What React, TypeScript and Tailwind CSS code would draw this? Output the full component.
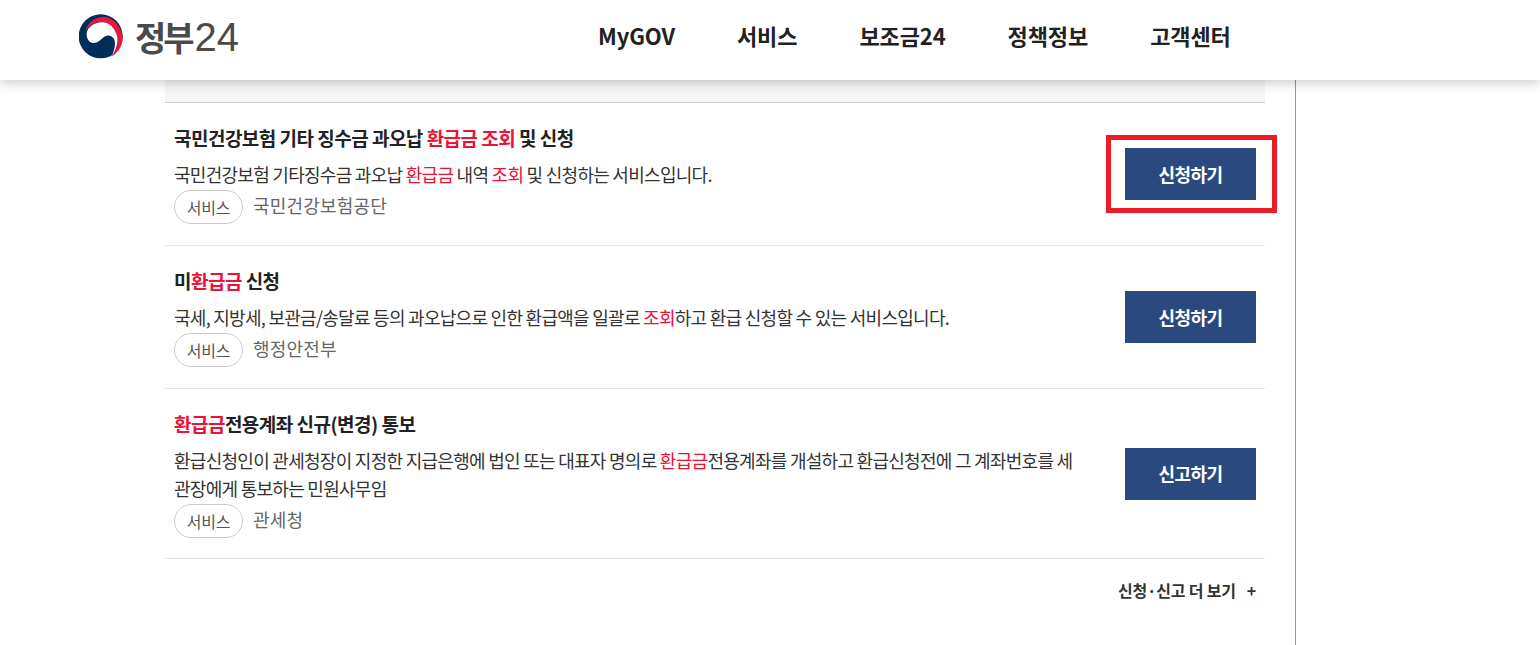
import React from "react";

const font = { fontFamily: '"Noto Sans CJK KR", "Noto Sans", sans-serif' };

function R({ children }: { children: React.ReactNode }) {
  return <span className="text-[#ec1238]">{children}</span>;
}

function Logo() {
  return (
    <svg width="46" height="46" viewBox="15 15 138 138" className="shrink-0">
      <circle cx="80" cy="82" r="66" fill="#002d5a" />
      <path d="M34 70C38 40 66 22 92 24C118 26 140 52 146 80C148 105 135 130 112 143C128 122 134 100 130 84C124 58 104 40 82 40C60 40 42 50 34 70Z" fill="#e8173c" />
      <path d="M38 76C38 56 60 40 84 40C106 40 124 58 130 84C132 100 128 120 114 141C122 120 126 104 120 90C114 78 100 76 90 84C80 92 72 102 58 102C46 102 38 90 38 76Z" fill="#fff" />
    </svg>
  );
}

function Row({
  title, desc, org, action, tall,
}: { title: React.ReactNode; desc: React.ReactNode; org: string; action: string; tall?: boolean }) {
  return (
    <div className={`flex items-center border-b border-[#e5e5e5] pl-[9px] pr-[9px] ${tall ? "h-[170px]" : "h-[143px]"}`}>
      <div className="min-w-0 flex-1 self-start pt-[21px]">
        <div className="text-[19px] leading-[27px] font-bold text-[#222] tracking-[-0.52px]">{title}</div>
        <div className="mt-[9px] w-[910px] break-all text-[18px] leading-[28px] text-[#333] tracking-[-0.72px]">{desc}</div>
        <div className="mt-[2px] flex items-center">
          <span className="flex h-[34px] w-[69px] items-center justify-center rounded-full border border-[#ccc] text-[16px] text-[#555] tracking-[-0.2px]">서비스</span>
          <span className="ml-[10px] pb-[3px] text-[18px] text-[#666] tracking-[0.2px]">{org}</span>
        </div>
      </div>
      <button className="flex h-[52px] w-[131px] shrink-0 items-center justify-center bg-[#2a4a7f] text-[18px] font-bold text-white tracking-[-0.5px]">{action}</button>
    </div>
  );
}

export default function App() {
  return (
    <div style={font} className="relative h-[645px] w-[1540px] overflow-hidden bg-white">
      <header className="relative z-10 flex h-[80px] items-center bg-white pl-[79px] shadow-[0_2px_12px_rgba(0,0,0,0.24)]">
        <div className="flex w-[519px] items-center pb-[6px]">
          <Logo />
          <span className="ml-[10px] text-[34px] leading-none font-bold text-[#4a4a4a] tracking-[-3px]">정부</span>
          <span className="ml-[3px] text-[40px] leading-none text-[#4a4a4a]" style={{ fontFamily: '"Liberation Sans", sans-serif' }}>24</span>
        </div>
        <nav className="flex gap-[62px] pb-[9px] text-[22px] font-bold text-[#222] tracking-[-0.1px]">
          <span>MyGOV</span>
          <span>서비스</span>
          <span>보조금24</span>
          <span>정책정보</span>
          <span>고객센터</span>
        </nav>
      </header>
      <div className="h-[565px] w-[1296px] border-r border-[#999] pl-[165px] pr-[30px]">
        <div className="h-[23px] border-b border-[#ccc] bg-[#f6f6f6]" />
        <Row
          title={<>국민건강보험 기타 징수금 과오납 <R>환급금 조회</R> 및 신청</>}
          desc={<>국민건강보험 기타징수금 과오납 <R>환급금</R> 내역 <R>조회</R> 및 신청하는 서비스입니다.</>}
          org="국민건강보험공단"
          action="신청하기"
        />
        <Row
          title={<>미<R>환급금</R> 신청</>}
          desc={<>국세, 지방세, 보관금/송달료 등의 과오납으로 인한 환급액을 일괄로 <R>조회</R>하고 환급 신청할 수 있는 서비스입니다.</>}
          org="행정안전부"
          action="신청하기"
        />
        <Row
          tall
          title={<><R>환급금</R>전용계좌 신규(변경) 통보</>}
          desc={<>환급신청인이 관세청장이 지정한 지급은행에 법인 또는 대표자 명의로 <R>환급금</R>전용계좌를 개설하고 환급신청전에 그 계좌번호를 세관장에게 통보하는 민원사무임</>}
          org="관세청"
          action="신고하기"
        />
        <div className="flex justify-end pt-[19px] pr-[9px] text-[16px] font-bold text-[#333] tracking-[-0.2px]">
          <span>신청·신고 더 보기</span>
          <span className="ml-[11px]">+</span>
        </div>
      </div>
      <div className="absolute left-[1106px] top-[135px] h-[78px] w-[171px] border-[5px] border-[#ee1c25]" />
    </div>
  );
}
